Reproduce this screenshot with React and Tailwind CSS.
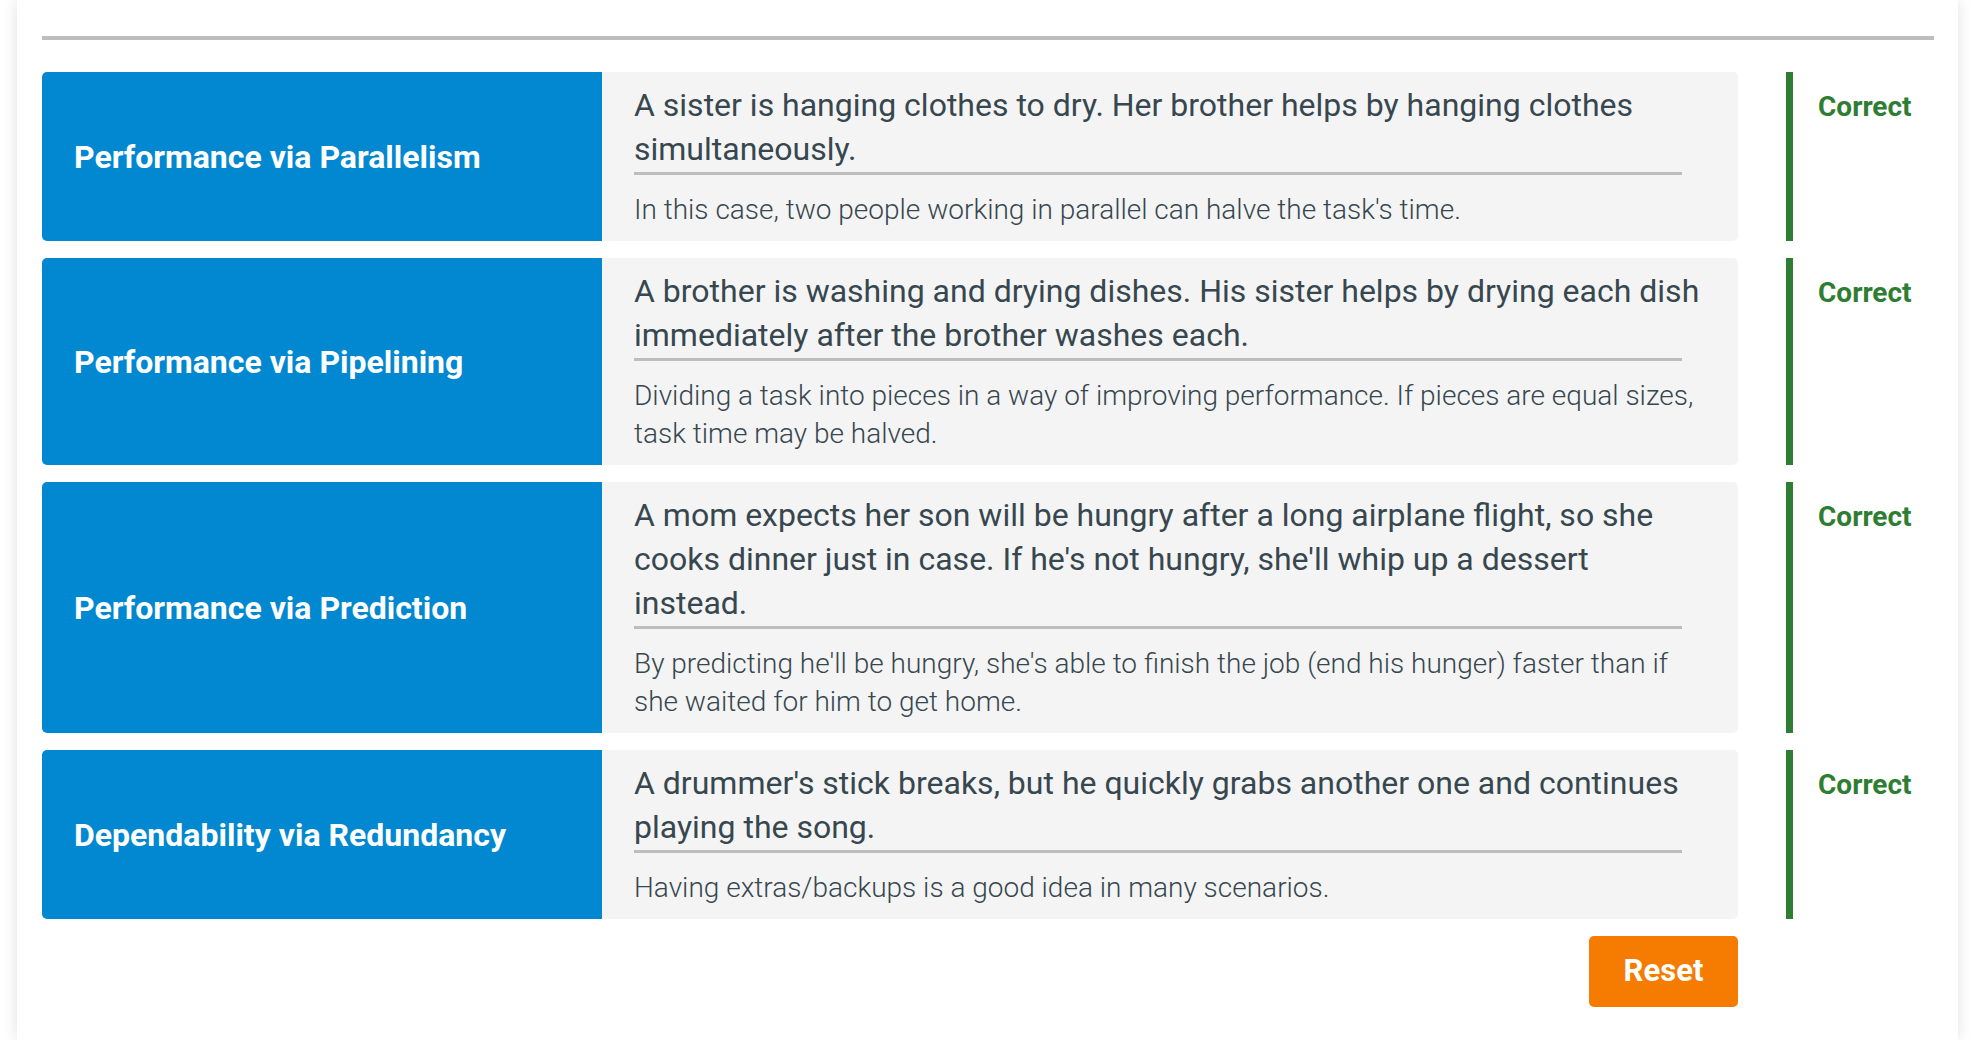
import { useState } from "react";

const items = [
  {
    title: "Performance via Parallelism",
    scenario:
      "A sister is hanging clothes to dry. Her brother helps by hanging clothes simultaneously.",
    explanation: "In this case, two people working in parallel can halve the task's time.",
  },
  {
    title: "Performance via Pipelining",
    scenario:
      "A brother is washing and drying dishes. His sister helps by drying each dish immediately after the brother washes each.",
    explanation:
      "Dividing a task into pieces in a way of improving performance. If pieces are equal sizes, task time may be halved.",
  },
  {
    title: "Performance via Prediction",
    scenario:
      "A mom expects her son will be hungry after a long airplane flight, so she cooks dinner just in case. If he's not hungry, she'll whip up a dessert instead.",
    explanation:
      "By predicting he'll be hungry, she's able to finish the job (end his hunger) faster than if she waited for him to get home.",
  },
  {
    title: "Dependability via Redundancy",
    scenario:
      "A drummer's stick breaks, but he quickly grabs another one and continues playing the song.",
    explanation: "Having extras/backups is a good idea in many scenarios.",
  },
];

function MatchRow({ item, showResult }) {
  return (
    <div className="flex items-stretch">
      <div className="w-[560px] shrink-0 flex items-center px-8 bg-[#0288d1] rounded-l-[5px]">
        <span className="text-white font-bold text-[32px] leading-tight">{item.title}</span>
      </div>
      <div className="w-[1136px] shrink-0 bg-[#f4f4f4] rounded-r-[5px] pl-8 pr-8 pt-[11px] pb-[12px] text-[#37474f]">
        <p className="text-[32px] leading-[44px]">{item.scenario}</p>
        <div className="h-[3px] bg-[#bdbdbd] mt-[1px] mb-[16px] mr-6" />
        <p className="text-[28px] leading-[38px] font-light">{item.explanation}</p>
      </div>
      <div className="flex ml-12">
        <div className="w-[7px] bg-[#2e7d32]" />
        <div className="pl-[25px] pt-[13px]">
          {showResult && (
            <span className="block text-[#2e7d32] font-bold text-[28px] leading-[44px]">
              Correct
            </span>
          )}
        </div>
      </div>
    </div>
  );
}

export default function App() {
  const [checked, setChecked] = useState(true);

  return (
    <div
      className="min-h-screen bg-white pl-[17px] pr-[22px]"
      style={{ fontFamily: "Roboto, 'Liberation Sans', sans-serif" }}
    >
      <div className="min-h-[1040px] bg-white shadow-[0_0_14px_rgba(0,0,0,0.12)] pl-[25px] pr-[24px] pt-[36px]">
        <div className="h-[4px] bg-[#bdbdbd]" />
        <div className="mt-[32px] flex flex-col gap-[17px]">
          {items.map((item) => (
            <MatchRow key={item.title} item={item} showResult={checked} />
          ))}
        </div>
        <div className="w-[1696px] flex justify-end mt-[17px]">
          <button
            onClick={() => setChecked(!checked)}
            className="w-[149px] h-[71px] bg-[#f57c00] text-white font-bold text-[31px] rounded-[5px]"
          >
            Reset
          </button>
        </div>
      </div>
    </div>
  );
}
